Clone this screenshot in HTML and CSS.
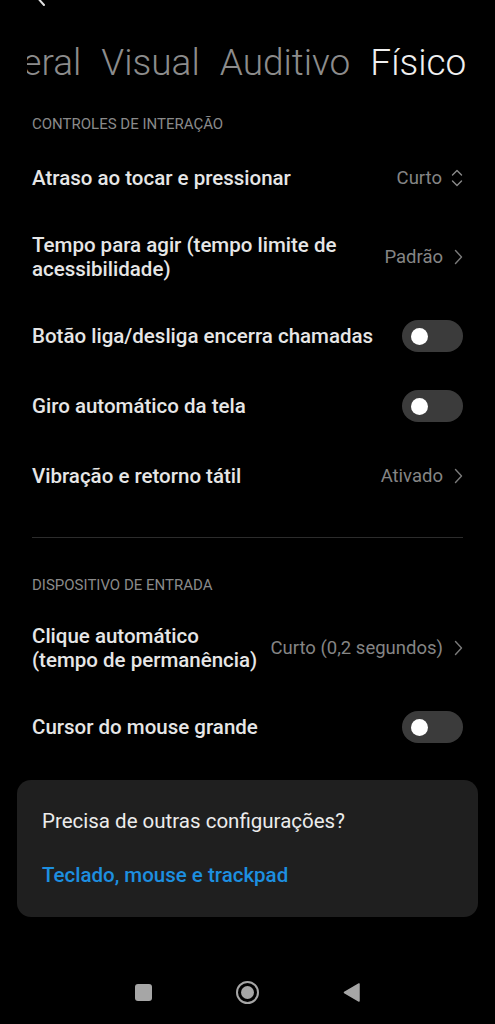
FILE: index.html
```html
<!DOCTYPE html>
<html lang="pt">
<head>
    <meta charset="utf-8">
    <title>Acessibilidade - Físico</title>
    <meta content="width=device-width, initial-scale=1.0" name="viewport">
    <link rel="stylesheet" href="styles.css">
</head>
<body>
<div class="screen">

    <!-- Barra superior (rolada para cima) -->
    <div class="topbar">
        <svg class="back" width="14" height="22" viewBox="0 0 14 22">
            <path d="M11 2 L3 11 L11 20" fill="none" stroke="#e0e0e0" stroke-width="2" stroke-linecap="round"/>
        </svg>
    </div>

    <!-- Abas -->
    <div class="tabs">
        <div class="tabs-track">
            <span class="tab">Geral</span>
            <span class="tab">Visual</span>
            <span class="tab">Auditivo</span>
            <span class="tab active">Físico</span>
        </div>
    </div>

    <div class="section-label">CONTROLES DE INTERAÇÃO</div>

    <div class="row">
        <span class="row-title">Atraso ao tocar e pressionar</span>
        <span class="row-value">Curto
            <svg class="updown" width="12" height="20" viewBox="0 0 12 20">
                <path d="M1.5 7 L6 2.5 L10.5 7 M1.5 13 L6 17.5 L10.5 13" fill="none" stroke="#8a8a8a" stroke-width="1.4" stroke-linecap="round" stroke-linejoin="round"/>
            </svg>
        </span>
    </div>

    <div class="row double">
        <span class="row-title">Tempo para agir (tempo limite de<br>acessibilidade)</span>
        <span class="row-value">Padrão
            <svg class="chev" width="9" height="16" viewBox="0 0 9 16">
                <path d="M1.5 1.5 L7.5 8 L1.5 14.5" fill="none" stroke="#7a7a7a" stroke-width="1.4" stroke-linecap="round" stroke-linejoin="round"/>
            </svg>
        </span>
    </div>

    <div class="row">
        <span class="row-title">Botão liga/desliga encerra chamadas</span>
        <span class="switch"><span class="knob"></span></span>
    </div>

    <div class="row">
        <span class="row-title">Giro automático da tela</span>
        <span class="switch"><span class="knob"></span></span>
    </div>

    <div class="row">
        <span class="row-title">Vibração e retorno tátil</span>
        <span class="row-value">Ativado
            <svg class="chev" width="9" height="16" viewBox="0 0 9 16">
                <path d="M1.5 1.5 L7.5 8 L1.5 14.5" fill="none" stroke="#7a7a7a" stroke-width="1.4" stroke-linecap="round" stroke-linejoin="round"/>
            </svg>
        </span>
    </div>

    <div class="divider"></div>

    <div class="section-label second">DISPOSITIVO DE ENTRADA</div>

    <div class="row double">
        <span class="row-title">Clique automático<br>(tempo de permanência)</span>
        <span class="row-value">Curto (0,2 segundos)
            <svg class="chev" width="9" height="16" viewBox="0 0 9 16">
                <path d="M1.5 1.5 L7.5 8 L1.5 14.5" fill="none" stroke="#7a7a7a" stroke-width="1.4" stroke-linecap="round" stroke-linejoin="round"/>
            </svg>
        </span>
    </div>

    <div class="row">
        <span class="row-title">Cursor do mouse grande</span>
        <span class="switch"><span class="knob"></span></span>
    </div>

    <!-- Cartão de sugestão -->
    <div class="more-card">
        <p class="more-question">Precisa de outras configurações?</p>
        <a class="more-link" href="#">Teclado, mouse e trackpad</a>
    </div>

    <!-- Navegação do sistema -->
    <div class="navbar">
        <span class="nav-square"></span>
        <span class="nav-home"><span class="nav-home-dot"></span></span>
        <svg class="nav-back" width="17" height="19" viewBox="0 0 17 19">
            <path d="M16 1 L16 18 L1.5 9.5 Z" fill="#a6a6a6" stroke="#a6a6a6" stroke-width="1.5" stroke-linejoin="round"/>
        </svg>
    </div>
</div>
</body>
</html>
```

FILE: styles.css
```css
body {
    margin: 0;
    padding: 0;
    background: #000;
    font-family: 'Roboto', 'Noto Sans', sans-serif;
    color: #e6e6e6;
}

.screen {
    width: 495px;
    height: 1024px;
    overflow: hidden;
}

.topbar {
    height: 8px;
    padding-left: 33px;
    overflow: hidden;
}

.back {
    display: block;
    margin-top: -15px;
}

/* Abas roladas: "Geral" fica cortado na esquerda */
.tabs {
    margin-top: 33px;
    height: 44px;
    overflow: hidden;
    clip-path: inset(0 0 0 27px);
}

.tabs-track {
    display: flex;
    gap: 20px;
    margin-left: -3px;
    white-space: nowrap;
}

.tab {
    font-size: 37px;
    font-weight: 300;
    line-height: 44px;
    color: #8c8c8c;
}

.tab.active {
    color: #f0f0f0;
}

.section-label {
    margin-top: 30px;
    padding: 0 32px 10px;
    font-size: 15px;
    line-height: 18px;
    color: #8a8a8a;
}

.section-label.second {
    margin-top: 38px;
}

.row {
    display: flex;
    justify-content: space-between;
    align-items: center;
    height: 70px;
    padding: 0 32px;
}

.row.double {
    height: 88px;
}

.row-title {
    font-size: 20.5px;
    font-weight: 500;
    line-height: 24px;
    color: #e6e6e6;
}

.row-value {
    display: flex;
    align-items: center;
    font-size: 18.5px;
    color: #858585;
    white-space: nowrap;
}

.updown {
    margin-left: 9px;
}

.chev {
    margin-left: 11px;
}

.switch {
    display: flex;
    align-items: center;
    width: 52px;
    height: 32px;
    padding-left: 9px;
    border-radius: 16px;
    background: #3b3b3b;
}

.knob {
    width: 17px;
    height: 17px;
    border-radius: 50%;
    background: #fff;
}

.divider {
    height: 1px;
    margin: 26px 32px 0;
    background: #2c2c2c;
}

.more-card {
    margin: 18px 17px 0;
    padding: 29px 25px 30px;
    border-radius: 14px;
    background: #1f1f1f;
}

.more-question {
    margin: 0 0 30px;
    font-size: 20.5px;
    line-height: 24px;
    color: #ececec;
}

.more-link {
    display: block;
    font-size: 20.5px;
    font-weight: 500;
    line-height: 24px;
    color: #1d8fe0;
    text-decoration: none;
}

.navbar {
    display: flex;
    justify-content: center;
    align-items: center;
    gap: 84px;
    height: 48px;
    margin-top: 51px;
}

.nav-square {
    width: 17px;
    height: 17px;
    border-radius: 3px;
    background: #a6a6a6;
}

.nav-home {
    display: flex;
    justify-content: center;
    align-items: center;
    width: 19px;
    height: 19px;
    border: 2.5px solid #a6a6a6;
    border-radius: 50%;
}

.nav-home-dot {
    width: 13px;
    height: 13px;
    border-radius: 50%;
    background: #a6a6a6;
}
```
